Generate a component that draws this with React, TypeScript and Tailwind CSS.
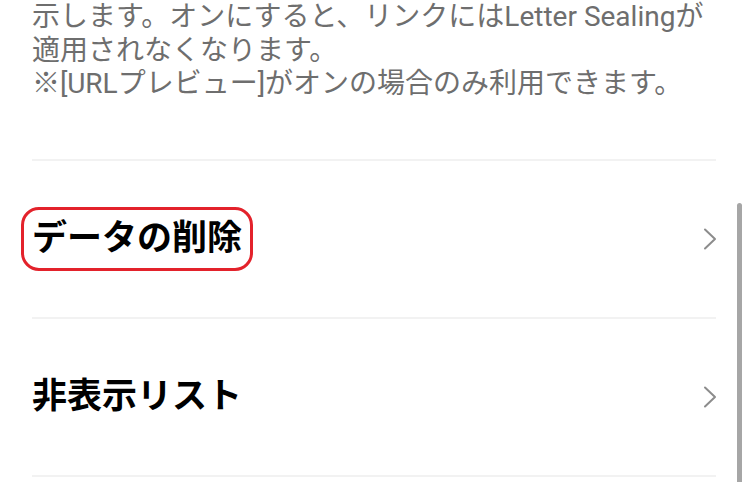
const fontStack = '"Roboto", "Noto Sans CJK JP", sans-serif'

function Divider() {
  return <div className="h-[2px] bg-[#f2f2f2]" />
}

function Chevron() {
  return (
    <svg width="14" height="24" viewBox="0 0 14 24" fill="none" className="mr-[-1px] shrink-0">
      <path d="M2 2.5 L12 12 L2 21.5" stroke="#8c8c8c" strokeWidth="2" strokeLinecap="round" strokeLinejoin="round" />
    </svg>
  )
}

function SettingRow({ label, highlighted = false }: { label: string; highlighted?: boolean }) {
  return (
    <div className="flex h-[156px] items-center justify-between">
      <span className="relative inline-block text-[35px] font-bold leading-none text-black">
        {label}
        {highlighted && (
          <span className="pointer-events-none absolute -left-[11px] -right-[11px] top-1/2 h-[64px] -translate-y-1/2 rounded-[18px] border-[3px] border-[#e3222b]" />
        )}
      </span>
      <Chevron />
    </div>
  )
}

export default function App() {
  return (
    <div className="relative h-[482px] w-[746px] overflow-hidden bg-white" style={{ fontFamily: fontStack }}>
      <div className="pl-8 pr-[30px]">
        <div className="whitespace-nowrap text-[28px] leading-[33.5px] text-[#6e6e6e]">
          <div>示します。オンにすると、リンクにはLetter Sealingが</div>
          <div>適用されなくなります。</div>
          <div>※[URLプレビュー]がオンの場合のみ利用できます。</div>
        </div>
        <div className="mt-[58px]">
          <Divider />
          <SettingRow label="データの削除" highlighted />
          <Divider />
          <SettingRow label="非表示リスト" />
          <Divider />
        </div>
      </div>

      {/* scroll indicator */}
      <div className="absolute right-[4px] top-[203px] h-[300px] w-[5px] rounded-full bg-[#a6a6a6]" />
    </div>
  )
}
